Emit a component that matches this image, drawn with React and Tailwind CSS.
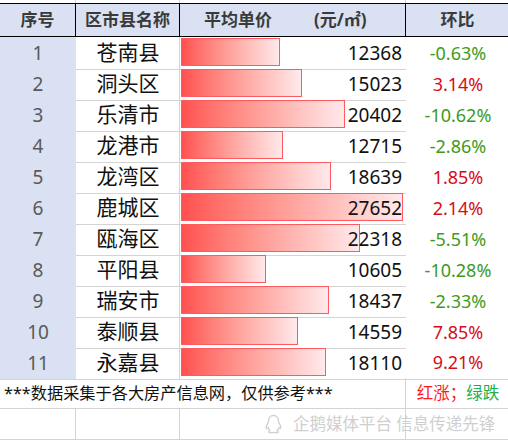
import React from "react";

const rows = [
  [1, "苍南县", 12368, "-0.63%"],
  [2, "洞头区", 15023, "3.14%"],
  [3, "乐清市", 20402, "-10.62%"],
  [4, "龙港市", 12715, "-2.86%"],
  [5, "龙湾区", 18639, "1.85%"],
  [6, "鹿城区", 27652, "2.14%"],
  [7, "瓯海区", 22318, "-5.51%"],
  [8, "平阳县", 10605, "-10.28%"],
  [9, "瑞安市", 18437, "-2.33%"],
  [10, "泰顺县", 14559, "7.85%"],
  [11, "永嘉县", 18110, "9.21%"],
];

const MAX = 27652;
const BAR_MAX = 222;

function Penguin() {
  return (
    <svg width="17" height="20" viewBox="0 0 17 20" fill="none" stroke="#d2d2d2" strokeWidth="1.4">
      <path d="M8.5 1.5c-3.2 0-5 2.6-5 5.6 0 1.3-.6 2.3-1.4 3.6-.9 1.5-1.1 3.4-.3 3.9.5.3 1-.3 1.4-.9.3 1.3 1 2.3 1.8 3-1 .4-1.6.9-1.3 1.5.4.6 2.6.6 4.8.2 2.2.4 4.4.4 4.8-.2.3-.6-.3-1.1-1.3-1.5.8-.7 1.5-1.7 1.8-3 .4.6.9 1.2 1.4.9.8-.5.6-2.4-.3-3.9-.8-1.3-1.4-2.3-1.4-3.6 0-3-1.8-5.6-5-5.6z" />
    </svg>
  );
}

export default function App() {
  return (
    <div className="relative w-[508px] h-[440px] bg-white overflow-hidden font-['Noto_Sans','Noto_Sans_CJK_SC',sans-serif]">
      {/* top strip above header */}
      <div className="grid grid-cols-[76px_104px_226px_102px] h-[3px]">
        <div className="border-r border-[#d4d4d4]" />
        <div className="border-r border-[#d4d4d4]" />
        <div className="border-r border-[#d4d4d4]" />
        <div />
      </div>

      {/* header */}
      <div className="grid grid-cols-[76px_104px_226px_102px] h-[34px] bg-[#d9e1f2] border-y border-black text-[17px] font-bold text-[#3a3a3a]">
        <div className="flex items-center justify-center border-r border-black">序号</div>
        <div className="flex items-center justify-center border-r border-black">区市县名称</div>
        <div className="flex items-center pl-[24px] border-r border-black">
          <span>平均单价</span>
          <span className="ml-[42px]">(元/㎡)</span>
        </div>
        <div className="flex items-center justify-center pl-[1px]">环比</div>
      </div>

      {/* data rows */}
      {rows.map(([n, name, v, pct], i) => {
        const last = i === rows.length - 1;
        const down = pct.startsWith("-");
        return (
          <div key={n} className="grid grid-cols-[76px_104px_226px_102px] h-[31px]">
            <div
              className={
                "flex items-center justify-center bg-[#d9e1f2] text-[19px] text-[#5a5a5a] " +
                (last ? "border-b border-[#d4d4d4]" : "")
              }
            >
              {n}
            </div>
            <div className="flex items-center justify-center border-r border-b border-[#d4d4d4] text-[21px] text-[#111] pl-[1px]">
              {name}
            </div>
            <div className="relative flex items-center justify-end border-b border-[#d4d4d4] pr-[4px] text-[19px] text-[#111]">
              <div
                className="absolute left-[1px] top-[1px] h-[28px] border border-[#ff5a60] bg-linear-to-r from-[#ff5050] to-[#ffe9eb]"
                style={{ width: Math.round((v / MAX) * BAR_MAX) }}
              />
              <span className="relative">{v}</span>
            </div>
            <div
              className={
                "flex items-center justify-center text-[18px] pl-[2px] " +
                (down ? "text-[#3d9b1c] " : "text-[#d80c18] ") +
                (last ? "border-b border-[#d4d4d4]" : "")
              }
            >
              {pct}
            </div>
          </div>
        );
      })}

      {/* footer note */}
      <div className="grid grid-cols-[406px_102px] h-[31px]">
        <div className="flex items-center pl-[4px] border-r border-b border-[#d4d4d4] text-[16.2px] text-[#111] whitespace-nowrap">
          ***数据采集于各大房产信息网，仅供参考***
        </div>
        <div className="flex items-center justify-center border-b border-[#d4d4d4] text-[16.5px] pl-[2px]">
          <span className="text-[#ff1a1a]">红涨；</span>
          <span className="text-[#1fb04c]">绿跌</span>
        </div>
      </div>

      {/* empty row */}
      <div className="grid grid-cols-[76px_104px_226px_102px] h-[31px]">
        <div className="border-r border-b border-[#d4d4d4]" />
        <div className="border-r border-b border-[#d4d4d4]" />
        <div className="border-r border-b border-[#d4d4d4]" />
        <div className="border-b border-[#d4d4d4]" />
      </div>

      {/* watermark */}
      <div className="absolute left-[265px] top-[412px] flex items-center gap-[11px] text-[16.5px] text-[#cfcfcf] whitespace-nowrap">
        <Penguin />
        <span>企鹅媒体平台 信息传递先锋</span>
      </div>
    </div>
  );
}
